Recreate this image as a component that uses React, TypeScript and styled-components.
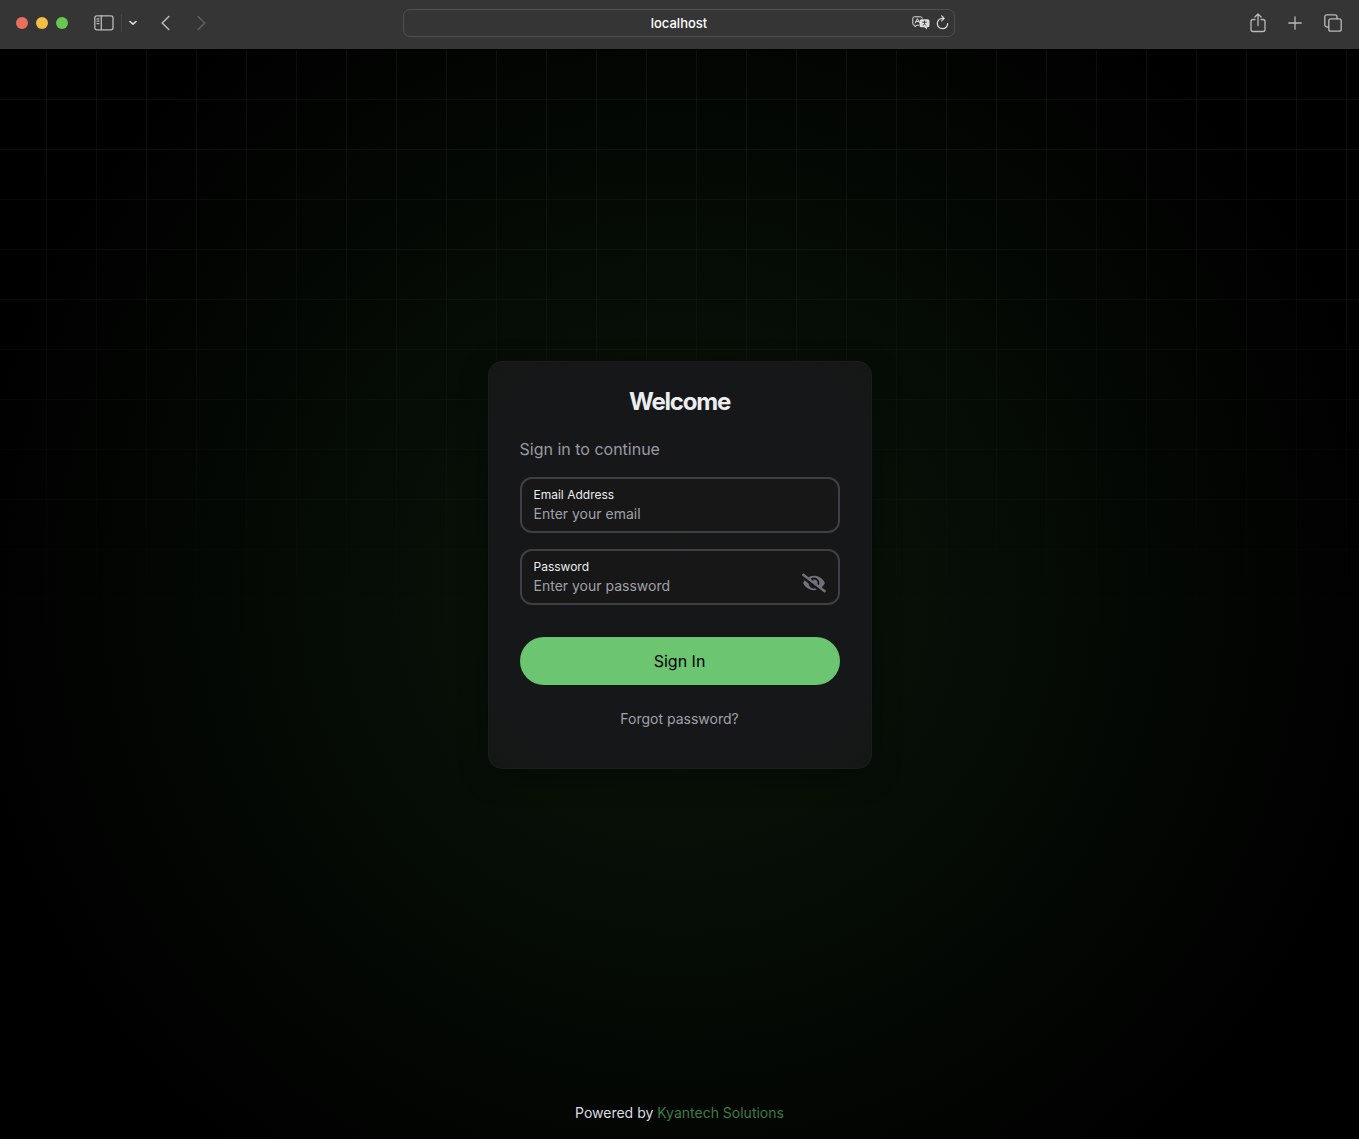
import React, { useState } from "react";
import styled, { createGlobalStyle } from "styled-components";
import { FaEye, FaEyeSlash } from "react-icons/fa";

const GlobalStyle = createGlobalStyle`
  *, *::before, *::after { box-sizing: border-box; }
  body {
    margin: 0;
    background: #000;
    color: #ecedee;
    font-family: Inter, "Liberation Sans", sans-serif;
  }
  button, input { font: inherit; }
`;

const Screen = styled.div`
  display: flex;
  flex-direction: column;
  min-height: 100vh;
`;

const Toolbar = styled.header`
  display: grid;
  grid-template-columns: 1fr minmax(160px, 552px) 1fr;
  align-items: center;
  flex: none;
  height: 50px;
  padding: 0 17px 4px 16px;
  background: #353535;
  border-bottom: 1px solid #000;
`;

const ToolGroup = styled.div<{ $end?: boolean; $gap: number }>`
  display: flex;
  align-items: center;
  justify-content: ${(p) => (p.$end ? "flex-end" : "flex-start")};
  gap: ${(p) => p.$gap}px;
`;

const WindowButtons = styled.div`
  display: flex;
  gap: 8px;
  margin-right: 26px;
`;

const WindowButton = styled.button<{ $color: string }>`
  width: 12px;
  height: 12px;
  padding: 0;
  border: 0;
  border-radius: 50%;
  background: ${(p) => p.$color};
`;

const IconButton = styled.button<{ $bright?: boolean }>`
  display: flex;
  align-items: center;
  justify-content: center;
  padding: 0;
  border: 0;
  background: none;
  color: ${(p) => (p.$bright ? "#dedede" : "#b9b9b9")};

  &:disabled { color: #5f5f5f; }
  svg { display: block; }
`;

const SidebarButtons = styled.div`
  display: flex;
  align-items: center;
  gap: 7px;
  margin-right: 24px;
`;

const Divider = styled.span`
  width: 1px;
  height: 18px;
  background: #484848;
`;

const AddressBar = styled.div`
  display: grid;
  grid-template-columns: 1fr auto 1fr;
  align-items: center;
  height: 28px;
  padding: 0 5px;
  border: 1px solid #505050;
  border-radius: 7px;
`;

const Address = styled.span`
  grid-column: 2;
  font-size: 13px;
  line-height: 20px;
  font-weight: 500;
  color: #fff;
`;

const Page = styled.main`
  position: relative;
  isolation: isolate;
  display: flex;
  flex-direction: column;
  flex: 1;
  background: radial-gradient(circle at 50% 50%, #0a160a 0%, #000 82%);

  &::before {
    content: "";
    position: absolute;
    inset: 0;
    z-index: -1;
    background-image:
      linear-gradient(to right, rgba(255, 255, 255, 0.05) 1px, transparent 1px),
      linear-gradient(to top, rgba(255, 255, 255, 0.05) 1px, transparent 1px);
    background-size: 50px 50px;
    background-position: -4px 0;
    mask-image: linear-gradient(to bottom, #000 0%, transparent 60%);
  }
`;

const Center = styled.div`
  display: flex;
  flex: 1;
  align-items: center;
  justify-content: center;
  padding: 24px;
`;

const Card = styled.form`
  display: flex;
  flex-direction: column;
  width: 100%;
  max-width: 384px;
  padding: 23px 31px 39px;
  border: 1px solid #1b1d1d;
  border-radius: 14px;
  background: radial-gradient(circle at 50% 50%, #161717 0%, #161719 50%, #161719 75%, #151715 100%);
  box-shadow: 0 8px 30px rgba(0, 0, 0, 0.3);
`;

const Title = styled.h1`
  margin: 0 0 18px;
  font-size: 24px;
  line-height: 34px;
  font-weight: 700;
  letter-spacing: -0.05em;
  text-align: center;
`;

const Intro = styled.p`
  margin: 0 0 16px;
  font-size: 16px;
  line-height: 24px;
  color: #9a9aa2;
`;

const Field = styled.div`
  display: flex;
  align-items: center;
  height: 56px;
  padding: 2px 12px 0;
  margin-bottom: 16px;
  border: 2px solid #3f3f46;
  border-radius: 12px;
  background: #161716;
`;

const FieldText = styled.div`
  display: flex;
  flex: 1;
  flex-direction: column;
  min-width: 0;
`;

const Label = styled.label`
  font-size: 12px;
  line-height: 16px;
  color: #ecedee;
`;

const Input = styled.input`
  width: 100%;
  height: 22px;
  padding: 0;
  border: 0;
  outline: 0;
  background: none;
  color: #ecedee;
  font-size: 14px;
  line-height: 20px;

  &::placeholder { color: #a1a1aa; opacity: 1; }
`;

const EyeButton = styled(IconButton)`
  padding-top: 10px;
  color: #71717a;
`;

const SubmitButton = styled.button`
  height: 48px;
  margin: 16px 0 24px;
  border: 0;
  border-radius: 24px;
  background: #6cc570;
  color: #000;
  font-size: 16px;
  line-height: 24px;
`;

const Forgot = styled.a`
  align-self: center;
  font-size: 14px;
  line-height: 20px;
  color: #a1a1aa;
  text-decoration: none;
`;

const Footer = styled.footer`
  padding: 24px 16px 16px;
  font-size: 14px;
  line-height: 20px;
  text-align: center;
  color: #dcdee0;

  a { color: #3e7c42; text-decoration: none; }
`;

const line = { fill: "none", stroke: "currentColor", strokeLinecap: "round", strokeLinejoin: "round" } as const;

const SidebarIcon = () => (
  <svg width="20" height="16" viewBox="0 0 20 16" {...line} strokeWidth="1.3">
    <rect x="0.8" y="0.8" width="18.2" height="14" rx="2" />
    <path d="M7.3 1v13.6M3 3.8h2M3 6.2h2M3 8.6h2" />
  </svg>
);

const DownIcon = () => (
  <svg width="8" height="6" viewBox="0 0 8 6" {...line} strokeWidth="1.6">
    <path d="M1 1.5 4 4.2 7 1.5" />
  </svg>
);

const BackIcon = () => (
  <svg width="9" height="16" viewBox="0 0 9 16" {...line} strokeWidth="1.6">
    <path d="M7.8 1.5 1.2 8l6.6 6.5" />
  </svg>
);

const ForwardIcon = () => (
  <svg width="9" height="16" viewBox="0 0 9 16" {...line} strokeWidth="1.6">
    <path d="M1.2 1.5 7.8 8l-6.6 6.5" />
  </svg>
);

const TranslateIcon = () => (
  <svg width="18" height="14" viewBox="0 0 18 14" {...line} strokeWidth="1">
    <path d="M6.5 9.2H5L3 11V9.2H2.4A1.6 1.6 0 0 1 .8 7.6V2.4A1.6 1.6 0 0 1 2.4.8h6.2a1.6 1.6 0 0 1 1.6 1.4" />
    <path d="M3.2 7 5.4 2.6 7.4 6.4M4 5.6h2.8" />
    <path
      d="M9.4 3.2h6.2A1.9 1.9 0 0 1 17.5 5v4.4a1.9 1.9 0 0 1-1.9 1.9H15v2.2l-2.4-2.2H9.4a1.9 1.9 0 0 1-1.9-1.9V5a1.9 1.9 0 0 1 1.9-1.8Z"
      fill="currentColor"
      stroke="none"
    />
    <path d="M10.5 6.2h4M12.5 4.9v1.3M11 9.3l1.5-1.4L14 9.3M12.5 6.2v1.7" stroke="#353535" strokeWidth="0.9" />
  </svg>
);

const ReloadIcon = () => (
  <svg width="13" height="15" viewBox="0 0 13 15" {...line} strokeWidth="1.2">
    <path d="M6.8 3.3A5.2 5.2 0 1 0 11.7 8.5M5.7.9 8.2 3.4 5.7 5.9" />
  </svg>
);

const ShareIcon = () => (
  <svg width="16" height="20" viewBox="0 0 16 20" {...line} strokeWidth="1.3">
    <path d="M5 6.5H3A2 2 0 0 0 1 8.5v8a2 2 0 0 0 2 2h10a2 2 0 0 0 2-2v-8a2 2 0 0 0-2-2h-2M8 12.5V1.2M4.9 4 8 1l3.1 3" />
  </svg>
);

const PlusIcon = () => (
  <svg width="14" height="14" viewBox="0 0 14 14" {...line} strokeWidth="1.3">
    <path d="M7 .8v12.4M.8 7h12.4" />
  </svg>
);

const TabsIcon = () => (
  <svg width="18" height="18" viewBox="0 0 18 18" {...line} strokeWidth="1.3">
    <rect x="4.8" y="4.8" width="12.4" height="12.4" rx="2" />
    <path d="M4.6 13H2.8a2 2 0 0 1-2-2V2.8a2 2 0 0 1 2-2H11a2 2 0 0 1 2 2v1.8" />
  </svg>
);

export default function App() {
  const [visible, setVisible] = useState(false);

  return (
    <Screen>
      <GlobalStyle />
      <Toolbar>
        <ToolGroup $gap={0}>
          <WindowButtons>
            <WindowButton type="button" $color="#e9705c" aria-label="Close" />
            <WindowButton type="button" $color="#f3bf42" aria-label="Minimize" />
            <WindowButton type="button" $color="#69c650" aria-label="Zoom" />
          </WindowButtons>
          <SidebarButtons>
            <IconButton type="button" aria-label="Sidebar"><SidebarIcon /></IconButton>
            <Divider />
            <IconButton type="button" $bright aria-label="Tab groups"><DownIcon /></IconButton>
          </SidebarButtons>
          <ToolGroup $gap={27}>
            <IconButton type="button" aria-label="Back"><BackIcon /></IconButton>
            <IconButton type="button" aria-label="Forward" disabled><ForwardIcon /></IconButton>
          </ToolGroup>
        </ToolGroup>
        <AddressBar>
          <Address>localhost</Address>
          <ToolGroup $gap={6} $end>
            <IconButton type="button" $bright aria-label="Translate"><TranslateIcon /></IconButton>
            <IconButton type="button" $bright aria-label="Reload"><ReloadIcon /></IconButton>
          </ToolGroup>
        </AddressBar>
        <ToolGroup $gap={22} $end>
          <IconButton type="button" aria-label="Share"><ShareIcon /></IconButton>
          <IconButton type="button" aria-label="New tab"><PlusIcon /></IconButton>
          <IconButton type="button" aria-label="Tab overview"><TabsIcon /></IconButton>
        </ToolGroup>
      </Toolbar>
      <Page>
        <Center>
          <Card onSubmit={(e) => e.preventDefault()}>
            <Title>Welcome</Title>
            <Intro>Sign in to continue</Intro>
            <Field>
              <FieldText>
                <Label htmlFor="email">Email Address</Label>
                <Input id="email" type="email" placeholder="Enter your email" />
              </FieldText>
            </Field>
            <Field>
              <FieldText>
                <Label htmlFor="password">Password</Label>
                <Input id="password" type={visible ? "text" : "password"} placeholder="Enter your password" />
              </FieldText>
              <EyeButton type="button" aria-label="Toggle password visibility" onClick={() => setVisible(!visible)}>
                {visible ? <FaEye size={24} /> : <FaEyeSlash size={24} />}
              </EyeButton>
            </Field>
            <SubmitButton type="submit">Sign In</SubmitButton>
            <Forgot href="#forgot">Forgot password?</Forgot>
          </Card>
        </Center>
        <Footer>
          Powered by <a href="#kyantech">Kyantech Solutions</a>
        </Footer>
      </Page>
    </Screen>
  );
}
